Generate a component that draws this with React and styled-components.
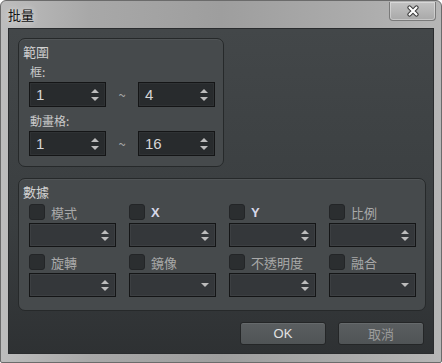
import React from 'react'
import styled, { createGlobalStyle } from 'styled-components'

const Global = createGlobalStyle`
  html, body { margin: 0; padding: 0; background: #ffffff; }
  body { font-family: "Noto Sans CJK TC", "Liberation Sans", sans-serif; }
`

const Window = styled.div`
  width: 442px;
  height: 363px;
  box-sizing: border-box;
  border: 1px solid #6b6b6b;
  border-radius: 6px 6px 2px 2px;
  background: linear-gradient(90deg, #bdbdbd 0%, #a8a8a8 20%, #9e9e9e 50%, #ababab 80%, #b6b6b6 100%);
  display: flex;
  flex-direction: column;
  overflow: hidden;
`

const TitleBar = styled.div`
  height: 27px;
  display: flex;
  align-items: flex-start;
  justify-content: space-between;
  padding: 0 5px 0 7px;
`

const Title = styled.span`
  font-size: 13px;
  line-height: 27px;
  color: #111;
  text-shadow: 0 0 6px rgba(255,255,255,0.8);
`

const CloseButton = styled.div`
  width: 47px;
  height: 19px;
  margin-top: 1px;
  box-sizing: border-box;
  border: 1px solid #7a7a7a;
  border-top: none;
  border-radius: 0 0 4px 4px;
  background: linear-gradient(180deg, #c2c2c2, #a9a9a9);
  box-shadow: inset 0 0 0 1px rgba(255,255,255,0.35);
  display: flex;
  align-items: center;
  justify-content: center;
`

const Body = styled.div`
  margin: 0 7px;
  height: 326px;
  box-sizing: border-box;
  border: 1px solid #2a2c2e;
  background: linear-gradient(180deg, #434749 0%, #3a3e40 60%, #2e3133 100%);
  padding: 9px 9px 0 9px;
  display: flex;
  flex-direction: column;
`

const Group = styled.div`
  width: ${p => p.$w}px;
  height: ${p => p.$h}px;
  margin-bottom: ${p => p.$mb || 0}px;
  box-sizing: border-box;
  border: 1px solid #26292a;
  border-radius: 7px;
  background: #464a4c;
  box-shadow: inset 0 1px 0 rgba(255,255,255,0.06);
  padding: 3px 0 0 4px;
  color: #cfcfcf;
`

const GroupTitle = styled.div`
  font-size: 13px;
  line-height: 20px;
  color: #d2d2d2;
`

const FieldLabel = styled.div`
  font-size: 12px;
  line-height: 16px;
  margin: ${p => p.$mt || 0}px 0 2px 7px;
  color: #c9c9c9;
`

const RangeRow = styled.div`
  display: flex;
  align-items: center;
  padding-left: 6px;
`

const Tilde = styled.span`
  width: 32px;
  text-align: center;
  font-size: 13px;
  color: #a8a8a8;
`

const Spin = styled.div`
  width: ${p => p.$w}px;
  height: ${p => p.$h}px;
  box-sizing: border-box;
  border: 1px solid #141516;
  background: ${p => (p.$dim ? '#34373a' : '#282b2d')};
  box-shadow: inset 0 0 0 1px ${p => (p.$dim ? '#3c3f42' : '#2f3234')};
  display: flex;
  align-items: center;
  justify-content: space-between;
  padding: 0 6px 0 6px;
  font-family: "Liberation Sans", sans-serif;
  font-size: 15px;
  color: #d6d6d6;
`

const Arrows = styled.div`
  display: flex;
  flex-direction: column;
  gap: ${p => p.$gap}px;
  align-items: center;
`

const Tri = styled.div`
  width: 0;
  height: 0;
  border-left: 4px solid transparent;
  border-right: 4px solid transparent;
  ${p => (p.$down ? 'border-top: 4px solid #bcbcbc;' : 'border-bottom: 4px solid #bcbcbc;')}
`

const DataGrid = styled.div`
  display: grid;
  grid-template-columns: repeat(4, 87px);
  column-gap: 13px;
  row-gap: 7px;
  padding-left: 6px;
  margin-top: 2px;
`

const Cell = styled.div`
  display: flex;
  flex-direction: column;
  gap: 3px;
`

const CheckRow = styled.div`
  display: flex;
  align-items: center;
  gap: 6px;
  height: 16px;
`

const Check = styled.div`
  width: 16px;
  height: 16px;
  box-sizing: border-box;
  border: 1px solid #232527;
  border-radius: 3px;
  background: #2b2e30;
`

const CheckLabel = styled.span`
  font-size: 13px;
  color: ${p => (p.$latin ? '#d8d8e8' : '#a9a9a9')};
  font-family: ${p => (p.$latin ? '"Liberation Sans", sans-serif' : 'inherit')};
  font-weight: ${p => (p.$latin ? 'bold' : 'normal')};
`

const Footer = styled.div`
  display: flex;
  justify-content: flex-end;
  gap: 12px;
  margin-top: 11px;
`

const Button = styled.div`
  width: 86px;
  height: 23px;
  box-sizing: border-box;
  border: 1px solid #242627;
  border-radius: 3px;
  background: linear-gradient(180deg, #5a5e60, #505456);
  box-shadow: inset 0 1px 0 rgba(255,255,255,0.08);
  display: flex;
  align-items: center;
  justify-content: center;
  font-size: 13px;
  color: ${p => (p.$muted ? '#9c9c9c' : '#e2e2e2')};
  font-family: ${p => (p.$latin ? '"Liberation Sans", sans-serif' : 'inherit')};
`

const SpinBox = ({ w, h, value, dim, dropdown }) => (
  <Spin $w={w} $h={h} $dim={dim}>
    <span>{value}</span>
    {dropdown ? (
      <Arrows $gap={0}><Tri $down /></Arrows>
    ) : (
      <Arrows $gap={h > 24 ? 4 : 3}><Tri /><Tri $down /></Arrows>
    )}
  </Spin>
)

const fields = [
  { label: '模式' },
  { label: 'X', latin: true },
  { label: 'Y', latin: true },
  { label: '比例' },
  { label: '旋轉' },
  { label: '鏡像', dropdown: true },
  { label: '不透明度' },
  { label: '融合', dropdown: true },
]

export default function App() {
  return (
    <>
      <Global />
      <Window>
        <TitleBar>
          <Title>批量</Title>
          <CloseButton>
            <svg width="14" height="12" viewBox="0 0 14 12">
              <path d="M3.5 2.5 L10.5 9.5 M10.5 2.5 L3.5 9.5" stroke="#3a3a3a" strokeWidth="4.2" strokeLinecap="round" />
              <path d="M3.5 2.5 L10.5 9.5 M10.5 2.5 L3.5 9.5" stroke="#ffffff" strokeWidth="2.2" strokeLinecap="round" />
            </svg>
          </CloseButton>
        </TitleBar>
        <Body>
          <Group $w={206} $h={129} $mb={11}>
            <GroupTitle>範圍</GroupTitle>
            <FieldLabel $mt={2}>框:</FieldLabel>
            <RangeRow>
              <SpinBox w={77} h={25} value="1" />
              <Tilde>~</Tilde>
              <SpinBox w={77} h={25} value="4" />
            </RangeRow>
            <FieldLabel $mt={6}>動畫格:</FieldLabel>
            <RangeRow>
              <SpinBox w={77} h={25} value="1" />
              <Tilde>~</Tilde>
              <SpinBox w={77} h={25} value="16" />
            </RangeRow>
          </Group>
          <Group $w={408} $h={133}>
            <GroupTitle>數據</GroupTitle>
            <DataGrid>
              {fields.map(f => (
                <Cell key={f.label}>
                  <CheckRow>
                    <Check />
                    <CheckLabel $latin={f.latin}>{f.label}</CheckLabel>
                  </CheckRow>
                  <SpinBox w={87} h={24} value="" dim dropdown={f.dropdown} />
                </Cell>
              ))}
            </DataGrid>
          </Group>
          <Footer>
            <Button $latin>OK</Button>
            <Button $muted>取消</Button>
          </Footer>
        </Body>
      </Window>
    </>
  )
}
